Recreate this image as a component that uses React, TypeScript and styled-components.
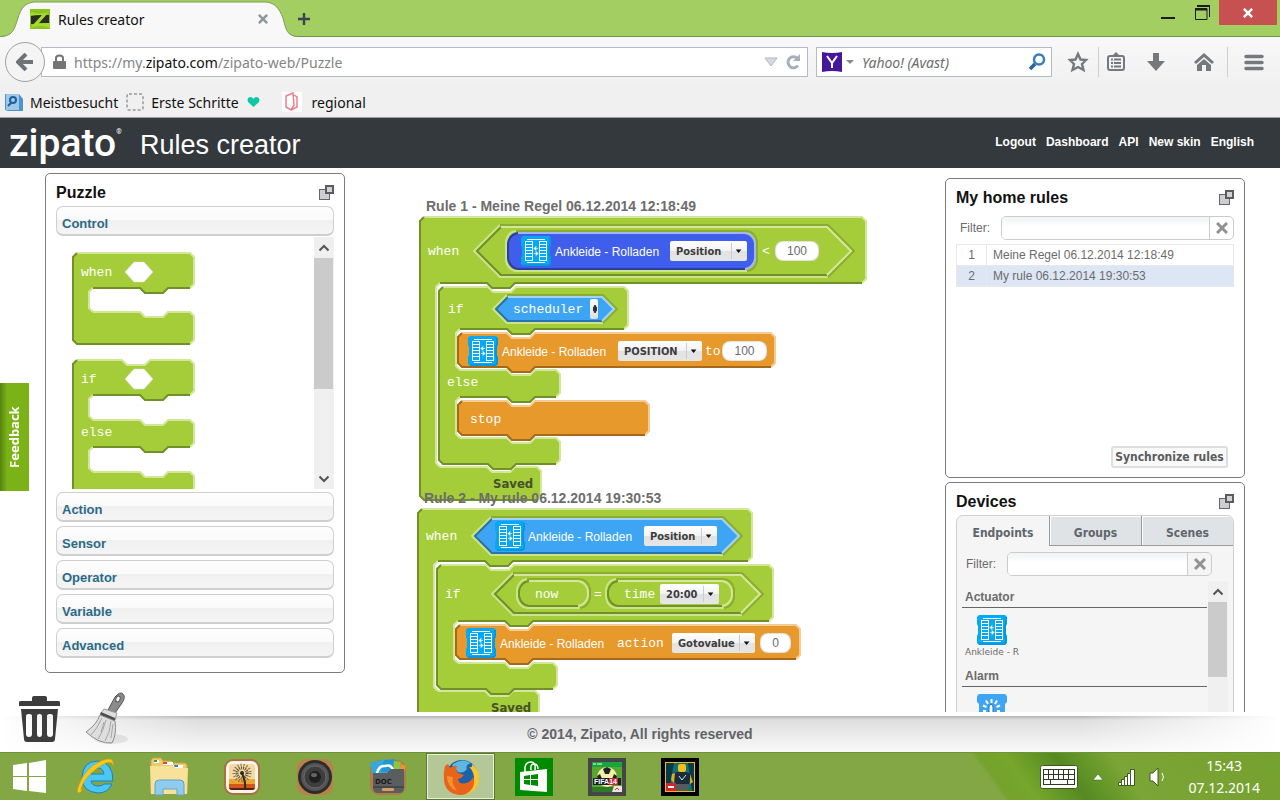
import React from "react";
import styled, { createGlobalStyle, css } from "styled-components";

const ui = `"Noto Sans", "Open Sans", sans-serif`;
const arial = `"Liberation Sans", Arial, sans-serif`;
const tahoma = `"DejaVu Sans Condensed", Tahoma, "Noto Sans", sans-serif`;
const mono = `"Liberation Mono", "Courier New", monospace`;

const GlobalStyle = createGlobalStyle`
  * {
    box-sizing: border-box;
  }

  body {
    margin: 0;
    background: #fff;
    font-family: ${arial};
    color: #6b6b6b;
  }

  button,
  input,
  select {
    font: inherit;
    color: inherit;
    margin: 0;
    padding: 0;
    border: 0;
    background: none;
  }

  a {
    color: inherit;
    text-decoration: none;
  }

  svg {
    display: block;
    flex: none;
  }
`;

/* ---------- puzzle block drawing ---------- */

type Palette = { fill: string; light: string; dark: string };

const green: Palette = { fill: "#a5cd39", light: "#d2e79a", dark: "#71902a" };
const orange: Palette = { fill: "#e7992b", light: "#f4ca95", dark: "#a4691a" };
const sky: Palette = { fill: "#3ea5f4", light: "#a3d3fb", dark: "#2a73ac" };
const indigo: Palette = { fill: "#3f5eeb", light: "#a6b4f8", dark: "#2a3f9e" };
const inset: Palette = { fill: "#a5cd39", light: "#8bac30", dark: "#cbe38b" };

interface StackProps {
  x: number;
  y: number;
  arms: { right: number; bottom: number }[];
  slots?: { x: number; bottom: number }[];
  socket?: boolean;
  bump?: boolean;
  palette?: Palette;
}

// arms are the horizontal bars of the block, slots the openings between them
const StackBlock: React.FC<StackProps> = ({
  x,
  y,
  arms,
  slots = [],
  socket,
  bump,
  palette = green,
}) => {
  const c = 4;
  const light: string[] = [];
  const dark: string[] = [];
  const all: string[] = [];
  const add = (list: string[], from: string, rest: string) => {
    list.push(`M${from}${rest}`);
    all.push(`${all.length ? "L" : "M"}${from}${rest}`);
  };
  const dipRight = (n: number, top: number) =>
    `H${n}L${n + 5} ${top + 5}H${n + 23}L${n + 28} ${top}`;
  const dipLeft = (n: number, top: number) =>
    `H${n + 28}L${n + 23} ${top + 5}H${n + 5}L${n} ${top}`;

  let top = y;
  let left = x;
  arms.forEach((arm, i) => {
    const notch = i > 0 ? dipRight(left + 51, top) : socket ? dipRight(x + 49, y) : "";
    add(
      light,
      `${left + c} ${top}`,
      `${notch}H${arm.right - c}L${arm.right} ${top + c}V${arm.bottom - c}L${arm.right - c} ${arm.bottom}`
    );
    const slot = slots[i];
    if (slot) {
      add(dark, `${arm.right - c} ${arm.bottom}`, `${dipLeft(slot.x + 51, arm.bottom)}H${slot.x + c}`);
      add(
        light,
        `${slot.x + c} ${arm.bottom}`,
        `L${slot.x} ${arm.bottom + c}V${slot.bottom - c}L${slot.x + c} ${slot.bottom}`
      );
      top = slot.bottom;
      left = slot.x;
    } else {
      add(
        dark,
        `${arm.right - c} ${arm.bottom}`,
        `${bump ? dipLeft(x + 49, arm.bottom) : ""}H${x + c}L${x} ${arm.bottom - c}V${y + c}L${x + c} ${y}`
      );
    }
  });

  return (
    <g fill="none" strokeWidth="2">
      <path d={all.join("")} fill={palette.fill} />
      <path d={light.join("")} stroke={palette.light} />
      <path d={dark.join("")} stroke={palette.dark} />
    </g>
  );
};

interface BoxProps {
  l: number;
  t: number;
  r: number;
  b: number;
  palette: Palette;
}

const Hex: React.FC<BoxProps> = ({ l, t, r, b, palette }) => {
  const m = (t + b) / 2;
  const c = m - t;
  return (
    <g strokeWidth="2" strokeLinejoin="round">
      <path d={`M${l} ${m}L${l + c} ${t}H${r - c}L${r} ${m}L${r - c} ${b}H${l + c}Z`} fill={palette.fill} />
      <path d={`M${l + c} ${t}L${l} ${m}L${l + c} ${b}H${r - c}`} fill="none" stroke={palette.dark} />
      <path d={`M${l + c} ${t}H${r - c}L${r} ${m}L${r - c} ${b}`} fill="none" stroke={palette.light} />
    </g>
  );
};

const Pill: React.FC<BoxProps> = ({ l, t, r, b, palette }) => (
  <g strokeWidth="2">
    <rect x={l} y={t} width={r - l} height={b - t} rx="10" fill={palette.fill} />
    <path
      d={`M${l + 10} ${t}Q${l + 2} ${t + 1} ${l} ${t + 10}V${b - 10}Q${l + 2} ${b - 1} ${l + 10} ${b}H${r - 10}`}
      fill="none"
      stroke={palette.dark}
    />
    <path
      d={`M${l + 10} ${t}H${r - 10}Q${r - 2} ${t + 1} ${r} ${t + 10}V${b - 10}Q${r - 2} ${b - 1} ${r - 10} ${b}`}
      fill="none"
      stroke={palette.light}
    />
  </g>
);

const HexBlock: React.FC<BoxProps> = ({ l, t, r, b, palette }) => (
  <>
    <Hex l={l} t={t} r={r} b={b} palette={inset} />
    <Hex l={l + 3} t={t + 2} r={r - 3} b={b - 2} palette={palette} />
  </>
);

const PillBlock: React.FC<BoxProps> = ({ l, t, r, b, palette }) => (
  <>
    <Pill l={l} t={t} r={r} b={b} palette={inset} />
    <Pill l={l + 2} t={t + 2} r={r - 2} b={b - 2} palette={palette} />
  </>
);

/* ---------- icons ---------- */

const ShutterIcon = () => (
  <svg width="30" height="30" viewBox="0 0 30 30" aria-hidden="true">
    <path d="M2 0H28L30 2V9L29 11V19L30 21V28L28 30H2L0 28V21L1 19V11L0 9V2Z" fill="#03a9f4" />
    <path d="M29 2V8L28 10V20L29 22V28L28 29H2" fill="none" stroke="#0288d1" />
    <path
      d="M6 3.5H24M6 26.5H24M4.5 5V25M11.5 5V25M18.5 5V25M25.5 5V25M4 5.5H12M4 8.5H12M4 11.5H12M4 14.5H12M4 17.5H12M4 20.5H12M4 24.5H12M18 5.5H26M18 8.5H26M18 11.5H26M18 14.5H26M18 17.5H26M18 20.5H26M18 24.5H26"
      stroke="#fff"
      fill="none"
    />
    <path d="M13 12.5H17M13 12.5L15 10.5V14.5ZM17 17.5H13M17 17.5L15 15.5V19.5Z" stroke="#fff" strokeWidth=".6" fill="#fff" />
  </svg>
);

const TouchIcon = () => (
  <svg width="30" height="30" viewBox="0 0 30 30" aria-hidden="true">
    <path d="M2 0H28L30 2V8L28 10V20L30 22V28L28 30H2L0 28V22L2 20V10L0 8V2Z" fill="#3ea5f4" />
    <path d="M14.5 5V9M9 6.5L11 10M20 6.5L18 10M6 11.5L9.5 13M23 11.5L19.5 13M6 17H9M20 17H23" stroke="#fff" strokeWidth="2" />
    <path d="M12 30V13Q12 10.5 14 10.5T16 13V19L22 21V30" fill="#fff" stroke="#2477b3" />
  </svg>
);

const DetachIcon = () => (
  <svg width="15" height="15" viewBox="0 0 15 15" aria-hidden="true">
    <rect x=".5" y="4.5" width="10" height="10" fill="#cfcdd2" stroke="#666" />
    <rect x="7" y="1" width="7" height="7" fill="#d4d2d6" stroke="#5c5c5c" strokeWidth="2" />
  </svg>
);

const CrossIcon = ({ size = 12, color = "#929292" }: { size?: number; color?: string }) => (
  <svg width={size} height={size} viewBox="0 0 12 12" aria-hidden="true">
    <path d="M1 1L11 11M11 1L1 11" stroke={color} strokeWidth="3" />
  </svg>
);

const Chevron = ({ down }: { down?: boolean }) => (
  <svg width="10" height="8" viewBox="0 0 10 8" aria-hidden="true">
    <path d={down ? "M.5 1.5L5 6L9.5 1.5" : "M.5 6.5L5 2L9.5 6.5"} fill="none" stroke="#555" strokeWidth="2" />
  </svg>
);

const TrashIcon = () => (
  <svg width="42" height="46" viewBox="0 0 42 46" aria-hidden="true">
    <path d="M0 6Q0 5 2 5H13V2Q13 0 15 0H26Q28 0 28 2V5H39Q41 5 41 6V10H0Z" fill="#3d3d3d" />
    <path
      d="M2 13H39L36 43Q36 46 33 46H8Q5 46 5 43ZM7 20V38Q7 41 10 41T13 38V20Q13 18 10 18T7 20ZM18 20V38Q18 41 20.5 41T23 38V20Q23 18 20.5 18T18 20ZM28 20V38Q28 41 31 41T34 38V20Q34 18 31 18T28 20Z"
      fill="#3d3d3d"
      fillRule="evenodd"
    />
  </svg>
);

const BroomIcon = () => (
  <svg width="44" height="54" viewBox="0 0 44 54" aria-hidden="true">
    <ellipse cx="26" cy="47" rx="17" ry="5" fill="#000" opacity=".08" />
    <path d="M30 5Q35-1 38 2T37 11L30 21L23 18Z" fill="#8b8b8b" stroke="#555" />
    <ellipse cx="33" cy="7" rx="2" ry="3" fill="#fff" stroke="#555" transform="rotate(25 33 7)" />
    <path d="M19 17L32 21L30 28L15 22Z" fill="#ddd" stroke="#999" />
    <path d="M16 20L30 26L30 29L15 23Z" fill="#4b4b4b" />
    <path d="M15 23L30 29Q32 42 27 51Q14 52 1 40Q12 32 15 23Z" fill="#dedede" stroke="#8d8d8d" />
    <path d="M17 26Q12 37 6 43M21 28Q18 40 13 47M26 29Q25 41 20 49M19 30L16 40M28 32L26 46" stroke="#a5a5a5" fill="none" />
  </svg>
);

/* ---------- browser window ---------- */

const Page = styled.div`
  display: flex;
  flex-direction: column;
  height: 100vh;
  overflow: hidden;
`;

const TabStrip = styled.div`
  position: relative;
  display: flex;
  align-items: flex-start;
  height: 37px;
  background: #a3cf62;
  border-bottom: 1px solid #6f9150;
`;

const TabShape = styled.svg`
  position: absolute;
  left: 0;
  top: 0;
`;

const BrowserTab = styled.div`
  position: relative;
  display: flex;
  align-items: center;
  gap: 8px;
  width: 284px;
  height: 38px;
  padding: 0 16px 0 30px;
  font: 14px ${ui};
  color: #111;

  span {
    flex: 1;
  }
`;

const PlainButton = styled.button`
  display: flex;
  align-items: center;
  justify-content: center;
  cursor: pointer;
`;

const NewTab = styled(PlainButton)`
  width: 40px;
  height: 38px;
`;

const WindowButtons = styled.div`
  display: flex;
  margin-left: auto;
  padding-right: 3px;
`;

const WindowButton = styled(PlainButton)<{ $close?: boolean }>`
  width: ${({ $close }) => ($close ? "58px" : "34px")};
  height: 25px;
  background: ${({ $close }) => ($close ? "#c75050" : "transparent")};
`;

const NavBar = styled.div`
  display: flex;
  align-items: center;
  height: 50px;
  padding-left: 5px;
  background: linear-gradient(#f8f8f8, #f0f0f0);
`;

const BackButton = styled(PlainButton)`
  position: relative;
  width: 40px;
  height: 40px;
  margin-right: -4px;
  border: 1px solid #a0a0a0;
  border-radius: 50%;
  background: #f4f4f4;
`;

const Field = styled.div<{ $grow?: boolean }>`
  display: flex;
  align-items: center;
  height: 30px;
  border: 1px solid #b4bac8;
  background: #fff;
  ${({ $grow }) =>
    $grow
      ? css`
          flex: 1;
          padding: 0 0 0 11px;
          margin-right: 8px;
        `
      : css`
          width: 236px;
          padding: 0 5px;
          margin-right: 5px;
        `}
`;

const Address = styled.div`
  flex: 1;
  margin-left: 8px;
  font: 14px ${ui};
  color: #858585;

  b {
    font-weight: 400;
    color: #111;
  }
`;

const SearchInput = styled.input`
  flex: 1;
  min-width: 0;
  margin-left: 8px;
  font: italic 14px ${ui};

  &::placeholder {
    color: #6d6d6d;
    opacity: 1;
  }
`;

const Tools = styled.div`
  display: flex;
  align-items: center;
  height: 50px;
`;

const Tool = styled(PlainButton)<{ $w: number; $line?: boolean }>`
  width: ${({ $w }) => $w}px;
  height: 30px;
  ${({ $line }) => $line && "border-left: 1px solid #c9d0d8;"}
`;

const Bookmarks = styled.nav`
  display: flex;
  align-items: center;
  height: 31px;
  padding-left: 5px;
  background: #f0f0f0;
  border-bottom: 1px solid #9aa39f;
  font: 14px ${ui};
  color: #111;
`;

const Bookmark = styled.a<{ $gap?: number }>`
  display: flex;
  align-items: center;
  gap: 7px;
  margin-right: ${({ $gap = 8 }) => $gap}px;
`;

/* ---------- page header ---------- */

const Header = styled.header`
  display: flex;
  align-items: center;
  height: 50px;
  flex: none;
  padding: 0 26px 0 9px;
  background: #34393d;
  color: #fff;
`;

const Logo = styled.a`
  width: 131px;
  font: 500 39px/48px Roboto, sans-serif;

  sup {
    font-size: 7px;
    line-height: 0;
    vertical-align: 22px;
  }
`;

const PageTitle = styled.h1`
  margin: 0;
  padding-top: 5px;
  font: 27px ${arial};
`;

const HeaderLinks = styled.nav`
  display: flex;
  gap: 10px;
  margin-left: auto;
  padding-bottom: 2px;
  font-size: 12px;
  font-weight: bold;
`;

/* ---------- panels ---------- */

const Main = styled.main`
  display: flex;
  flex: 1;
  min-height: 0;
  margin-bottom: 4px;
  padding: 0 35px 0 45px;
  overflow: hidden;
`;

const Column = styled.div<{ $top: number }>`
  display: flex;
  flex-direction: column;
  flex: none;
  gap: 4px;
  width: 300px;
  padding-top: ${({ $top }) => $top}px;
`;

const Panel = styled.section<{ $height?: number }>`
  display: flex;
  flex-direction: column;
  flex: none;
  min-height: ${({ $height = 0 }) => $height}px;
  padding: 0 10px;
  border: 1px solid #7c7c7c;
  border-radius: 5px;
  background: #fff;
`;

const PanelHead = styled.div<{ $tall?: boolean }>`
  display: flex;
  align-items: center;
  justify-content: space-between;
  height: ${({ $tall }) => ($tall ? 37 : 32)}px;
  padding-top: ${({ $tall }) => ($tall ? 0 : 5)}px;

  h2 {
    margin: 0;
    font: bold 16px ${arial};
    color: #111;
  }
`;

const Accordion = styled.div`
  display: flex;
  flex-direction: column;
  gap: 4px;
`;

const AccordionHead = styled.button`
  height: 30px;
  padding: 6px 0 0 5px;
  text-align: left;
  font: bold 13px ${arial};
  color: #2b6a86;
  border: 1px solid #cfcfcf;
  border-bottom-width: 2px;
  border-radius: 7px;
  background: linear-gradient(#fdfdfd, #fafafa 48%, #f0f0f0 50%, #f5f5f5);
`;

const Pane = styled.div`
  display: flex;
  height: 252px;
  margin-top: -3px;
  margin-bottom: -1px;
  overflow: hidden;
`;

const PaletteArea = styled.div`
  flex: 1;
  padding: 15px 0 0 16px;
`;

const PaletteBlock = styled.div<{ $height: number }>`
  position: relative;
  height: ${({ $height }) => $height}px;
  padding-left: 9px;
  font: 13px ${mono};
  color: #fff;

  svg {
    position: absolute;
    left: 0;
    top: 0;
    overflow: visible;
  }

  span {
    position: relative;
    display: flex;
    align-items: center;
    height: 40px;
  }

  span + span {
    height: 66px;
  }
`;

const ScrollTrack = styled.div`
  display: flex;
  flex-direction: column;
  width: 20px;
  background: #f0f0f0;
`;

const ScrollArrow = styled(PlainButton)`
  height: 21px;
`;

const Thumb = styled.div<{ $height: number }>`
  height: ${({ $height }) => $height}px;
  margin-right: 1px;
  margin-bottom: auto;
  background: #cbcbcb;
`;

const FilterRow = styled.div<{ $right?: number }>`
  display: flex;
  align-items: center;
  height: 24px;
  padding-right: ${({ $right = 0 }) => $right}px;
  font-size: 12px;

  label {
    width: 45px;
    padding-left: 4px;
  }
`;

const FilterBox = styled.div`
  display: flex;
  flex: 1;
  height: 24px;
  border: 1px solid #cbcbcb;
  border-radius: 5px;
  overflow: hidden;

  input {
    flex: 1;
    min-width: 0;
    padding: 0 5px;
    background: linear-gradient(#f0f4f4, #fff 10px);
  }

  button {
    width: 24px;
    border-left: 1px solid #cbcbcb;
  }
`;

const RulesTable = styled.table`
  width: 100%;
  margin-top: 4px;
  border-collapse: collapse;
  font-size: 12px;

  td {
    height: 21px;
    padding: 0 6px 1px;
    border: 1px solid #e8e8e8;
  }

  td:first-child {
    width: 30px;
    padding: 0 0 1px;
    text-align: center;
  }
`;

const RuleRow = styled.tr<{ $active?: boolean }>`
  background: ${({ $active }) => ($active ? "#dde6f5" : "#fff")};
`;

const SyncButton = styled.button`
  align-self: flex-end;
  width: 117px;
  height: 22px;
  margin: auto 6px 9px 0;
  border: 2px solid #dedede;
  border-radius: 3px;
  background: #f8f9f9;
  white-space: nowrap;
  font: bold 12px ${tahoma};
  color: #5b5b5b;
`;

const TabBox = styled.div`
  border: 1px solid #cfcfcf;
  border-radius: 7px 7px 0 0;
  background: #f5f5f5;
  overflow: hidden;
`;

const Tabs = styled.div`
  display: grid;
  grid-template-columns: 1fr 1fr 1fr;
  height: 30px;
`;

const TabButton = styled.button<{ $active?: boolean }>`
  padding-top: 4px;
  font: bold 12px ${tahoma};
  color: #60666b;
  ${({ $active }) =>
    !$active &&
    css`
      background: #dfe3e6;
      border-left: 1px solid #999;
      border-bottom: 1px solid #999;
      box-shadow: inset 1px 1px #fff;
    `}
`;

const TabBody = styled.div`
  padding: 6px 5px 0;
`;

const DeviceScroll = styled.div`
  display: flex;
  height: 240px;
  margin-top: 5px;
`;

const DeviceList = styled.div`
  flex: 1;
  padding-top: 6px;
`;

const GroupTitle = styled.h3`
  margin: 0 1px 7px 0;
  padding: 0 3px;
  border-bottom: 1px solid #666;
  font: bold 12px/20px ${arial};
`;

const DeviceItem = styled.a`
  display: block;
  margin-bottom: 7px;
  padding-left: 3px;
  white-space: nowrap;
  font: 9px/14px "DejaVu Sans", Verdana, sans-serif;

  svg {
    margin-left: 12px;
  }
`;

/* ---------- rule canvas ---------- */

const Canvas = styled.div`
  position: relative;
  flex: 1;
  overflow: hidden;
`;

const Rule = styled.article<{ $x: number; $y: number }>`
  position: absolute;
  left: ${({ $x }) => $x}px;
  top: ${({ $y }) => $y}px;
  font: 13px ${mono};
  color: #fff;

  > svg {
    position: absolute;
    left: 0;
    top: 19px;
    overflow: visible;
  }
`;

const RuleTitle = styled.h3`
  position: relative;
  margin: 0;
  padding-left: 7px;
  font: bold 14px/20px ${arial};
  color: #6d6d6d;
  white-space: nowrap;
`;

const BlockRow = styled.div<{ $height: number; $indent: number; $cols?: string }>`
  position: relative;
  display: grid;
  grid-template-columns: ${({ $cols = "auto" }) => $cols};
  align-items: center;
  height: ${({ $height }) => $height}px;
  padding-left: ${({ $indent }) => $indent}px;
`;

const DeviceName = styled.span`
  padding-top: 2px;
  font: 12px ${arial};
  white-space: nowrap;
`;

const Saved = styled.strong`
  font: bold 13px ${tahoma};
  color: #46502a;
`;

const Drop = styled.span<{ $width: number }>`
  display: flex;
  align-items: center;
  width: ${({ $width }) => $width}px;
  height: 20px;
  border-radius: 2px;
  background: linear-gradient(#fff, #f3f3f3 48%, #e2e2e2 52%, #e6e6e6);

  select {
    flex: 1;
    min-width: 0;
    height: 20px;
    padding-left: 6px;
    appearance: none;
    font: bold 11px ${tahoma};
    color: #3c3c3c;
  }

  svg {
    width: 16px;
    height: 16px;
    border-left: 1px solid #ccc;
  }
`;

const MiniSelect = styled.select`
  width: 8px;
  height: 20px;
  appearance: none;
  border-radius: 2px;
  background: radial-gradient(ellipse 2px 4px at 5px 10px, #333 90%, transparent), linear-gradient(#fff, #ddd);
`;

const NumberInput = styled.input<{ $width: number }>`
  width: ${({ $width }) => $width}px;
  height: 20px;
  border-radius: 8px;
  background: #fff;
  box-shadow: inset 0 0 2px #999;
  text-align: center;
  font: 12px ${arial};
  color: #6b6b6b;
`;

interface DropdownProps {
  width: number;
  value: string;
  label: string;
}

const Dropdown: React.FC<DropdownProps> = ({ width, value, label }) => (
  <Drop $width={width}>
    <select aria-label={label}>
      <option>{value}</option>
    </select>
    <svg viewBox="0 0 16 16" aria-hidden="true">
      <path d="M4 6.5H10L7 10Z" fill="#111" />
    </svg>
  </Drop>
);

/* ---------- feedback, footer, taskbar ---------- */

const Feedback = styled.button`
  position: fixed;
  left: 0;
  top: 383px;
  width: 29px;
  height: 108px;
  writing-mode: vertical-rl;
  transform: rotate(180deg);
  background: linear-gradient(270deg, #55820f, #7bb216 7px);
  font: bold 13px ${ui};
  color: #fff;
`;

const Footer = styled.footer`
  position: relative;
  display: flex;
  align-items: center;
  justify-content: center;
  flex: none;
  height: 36px;
  background: linear-gradient(90deg, #fff, transparent 200px), linear-gradient(270deg, #fff, transparent 200px),
    linear-gradient(#b4b4b4, #dedede 4px, #f9f9f9);
  font: bold 14px ${arial};
  color: #5f6467;
`;

const CanvasTools = styled.div`
  position: absolute;
  left: 19px;
  bottom: 6px;
  display: flex;
  align-items: center;
  gap: 24px;
`;

const Taskbar = styled.div`
  display: flex;
  flex: none;
  height: 48px;
  border-top: 1px solid #6f9238;
  background: linear-gradient(
      54deg,
      transparent 812px,
      #74a22c 818px,
      #76a62b 840px,
      #558a22 880px,
      #6c9c2c 910px,
      #7ba536 925px,
      #75a12f
    ),
    #83a745;
`;

const TaskItem = styled(PlainButton)<{ $active?: boolean; $width?: number }>`
  width: ${({ $width = 73 }) => $width}px;
  ${({ $active }) =>
    $active &&
    css`
      border: 1px solid #5d7638;
      margin: 0 2px;
      width: 69px;
      background: #b4c796;
      box-shadow: inset 0 0 0 1px #e9f0dc;
    `}
`;

const Tray = styled.div`
  display: flex;
  align-items: center;
  gap: 14px;
  margin-left: auto;
  padding-right: 20px;
`;

const Clock = styled.time`
  margin-left: 7px;
  text-align: center;
  font: 14px/22px ${ui};
  color: #fff;
`;

const tile = { width: 38, height: 38, viewBox: "0 0 38 38", "aria-hidden": true };

const IeIcon = () => (
  <svg width="40" height="40" viewBox="0 0 40 40" aria-hidden="true">
    <path
      d="M37 24H15Q16 29 22 29Q26 29 28 27H36Q32 36 22 36Q6 35 6 20Q7 4 22 4Q37 5 37 24ZM15 17H28Q27 11 22 11T15 17Z"
      fill="#4cc6f4"
      stroke="#1484c4"
      fillRule="evenodd"
    />
    <path d="M9 31Q-2 42 3 28Q9 11 25 4Q39-2 37 9Q36 2 26 8Q10 18 6 29Q3 37 9 31Z" fill="#fbc917" stroke="#d99b09" strokeWidth=".6" />
  </svg>
);

const FolderIcon = () => (
  <svg width="40" height="40" viewBox="0 0 40 40" aria-hidden="true">
    <path d="M2 3L4 1H12L14 4H22L24 6H36L38 8V36H2Z" fill="#eccb6b" stroke="#c9a447" />
    <path d="M5 3H10V6H5ZM14 5H24V8H14ZM24 8H34V11H24Z" fill="#fff" />
    <path d="M5 3H8V5H5Z" fill="#27a35a" />
    <path d="M14 5H18V7H14Z" fill="#e0492f" />
    <path d="M25 8H29V10H25Z" fill="#3286d4" />
    <path d="M1 9H25L27 11H39L38 37H2Z" fill="#f8e29a" />
    <path d="M6 38V27Q6 23 10 23H31Q35 23 35 27V38H28V32H14V38Z" fill="#8ecbec" stroke="#5aa6d2" />
  </svg>
);

const DandelionIcon = () => (
  <svg {...tile}>
    <rect x="1" y="1" width="36" height="36" rx="9" fill="#a8713d" />
    <rect x="3" y="3" width="32" height="32" rx="7" fill="#f7f4ef" />
    <rect x="6" y="6" width="26" height="26" rx="3" fill="#f3dba0" />
    <path d="M6 21H32V29Q32 32 29 32H9Q6 32 6 29Z" fill="#eda534" />
    <path d="M6 26H32V29Q32 32 29 32H9Q6 32 6 29Z" fill="#d2571a" />
    <path d="M6 30H32Q31 32 29 32H9Q7 32 6 30Z" fill="#5b210e" />
    <circle cx="19" cy="15" r="8" fill="none" stroke="#7d6c55" strokeWidth="3" strokeDasharray="1 2" />
    <circle cx="19" cy="15" r="5" fill="none" stroke="#5a4b3a" strokeWidth="3" strokeDasharray="1 1" />
    <circle cx="19" cy="15" r="2" fill="#332718" />
    <path d="M19 15Q23 24 22 32" stroke="#332718" strokeWidth="2" fill="none" />
  </svg>
);

const SpeakerIcon = () => (
  <svg {...tile}>
    <rect x="1" y="1" width="36" height="36" rx="9" fill="#b88149" />
    <circle cx="19" cy="19" r="17" fill="#2c2c2c" />
    <circle cx="19" cy="19" r="14" fill="#555" />
    <circle cx="19" cy="19" r="11" fill="#3d3d3d" stroke="#6a6a6a" />
    <circle cx="19" cy="19" r="6" fill="#1f1f1f" />
    <ellipse cx="18" cy="17" rx="3" ry="2" fill="#666" />
  </svg>
);

const DocIcon = () => (
  <svg {...tile}>
    <rect x="1" y="2" width="36" height="35" rx="9" fill="#b27a44" />
    <path d="M1 5L16 1L20 14L5 22Z" fill="#35a9dc" />
    <path d="M15 2L26 1V14H12Z" fill="#2396cf" />
    <path d="M25 3L32 4L30 14H24Z" fill="#8cc63f" />
    <path d="M32 6L37 8L35 14H30Z" fill="#f2932e" />
    <path d="M8 15Q10 7 16 8Q22 6 24 12L30 16" stroke="#fff" strokeWidth="2.5" fill="none" />
    <path d="M4 15H18L22 11H35V30Q35 35 30 35H9Q4 35 4 30Z" fill="#5b5e61" />
    <path d="M4 29H35" stroke="#2f3133" />
    <rect x="13" y="30" width="12" height="3" rx="1" fill="#d89c5c" />
    <text x="6" y="26" fontFamily="DejaVu Sans, sans-serif" fontWeight="bold" fontSize="7" fill="#1b1b1b">
      DOC
    </text>
  </svg>
);

const FirefoxIcon = () => (
  <svg {...tile}>
    <circle cx="20" cy="18" r="16" fill="#1d62a8" />
    <path d="M10 7Q19-1 29 5Q23 7 25 11Q21 16 16 14Z" fill="#5fb6e3" />
    <path d="M30 6Q38 12 37 22Q35 34 23 37Q33 29 32 19Q31 12 27 9Q31 10 30 6Z" fill="#fbc62d" />
    <path d="M3 8L6 6L8 10Q12 7 15 8Q13 11 16 15L22 17Q20 20 16 21Q17 27 24 25Q29 24 31 19Q34 27 29 32Q25 37 18 37Q4 36 2 23Q1 15 3 8Z" fill="#e8641b" />
    <path d="M5 18Q5 29 15 33Q9 25 11 19Z" fill="#f6922c" />
  </svg>
);

const StoreIcon = () => (
  <svg {...tile}>
    <rect width="38" height="38" fill="#008a00" />
    <path d="M10 14V9Q11 4 16 4T20 12M16 12Q15 6 19 6T23 11" fill="none" stroke="#fff" strokeWidth="1.5" />
    <path d="M5 14L32 11V34L5 32Z" fill="#fff" />
    <path d="M9 18L15 17V21H9ZM16 17L23 16V21H16ZM9 22H15V27L9 26ZM16 22H23V28L16 27Z" fill="#008a00" />
  </svg>
);

const FifaIcon = () => (
  <svg {...tile}>
    <rect width="38" height="38" fill="#454545" />
    <rect x="4" y="4" width="30" height="30" fill="#57a82c" />
    <rect x="4" y="4" width="30" height="5" fill="#17a63d" />
    <path d="M5 6H8M9 6H14" stroke="#fff" />
    <circle cx="19" cy="19" r="10" fill="#f3efa8" />
    <path d="M15 11L19 9L23 11L21 16H17ZM9 18L12 16L14 21L10 23ZM29 18L26 16L24 21L28 23Z" fill="#222" />
    <path d="M4 29H34V34H4Z" fill="#2f7a26" />
    <rect x="5" y="20" width="28" height="7" fill="#17202c" />
    <rect x="21" y="20" width="9" height="7" fill="#c9263a" />
    <text x="6" y="26" fontFamily="Liberation Sans, sans-serif" fontWeight="bold" fontSize="7" fill="#fff">
      FIFA14
    </text>
    <path d="M24 34L26 28H34V34Z" fill="#e9e2e2" />
    <path d="M27 32L29 30L31 32" stroke="#d33" fill="none" />
  </svg>
);

const LegoIcon = () => (
  <svg {...tile}>
    <rect width="38" height="38" />
    <rect x="4.5" y="4.5" width="29" height="29" fill="#0f6f7a" stroke="#f0b81a" />
    <path d="M5 5H13L8 33H5ZM33 5H27L31 33H33Z" fill="#063a45" />
    <rect x="17" y="6" width="8" height="8" rx="2" fill="#eebf1e" />
    <path d="M12 15L17 14H25L30 16L28 26H14Z" fill="#1b2d3b" />
    <path d="M11 16L14 15L13 25L10 22ZM29 16L32 24L29 26Z" fill="#dfae1c" />
    <path d="M14 26H28L27 33H16Z" fill="#545b60" />
    <path d="M18 18L21 22L25 17" stroke="#d0dce0" fill="none" />
    <rect x="5" y="25" width="10" height="8" fill="#d8232a" />
    <path d="M7 29H13" stroke="#fff" strokeWidth="2" />
  </svg>
);

const categories = ["Action", "Sensor", "Operator", "Variable", "Advanced"];
const rules = ["Meine Regel 06.12.2014 12:18:49", "My rule 06.12.2014 19:30:53"];
const headerLinks = ["Logout", "Dashboard", "API", "New skin", "English"];
const apps: [string, React.FC][] = [
  ["Internet Explorer", IeIcon],
  ["Explorer", FolderIcon],
  ["Photos", DandelionIcon],
  ["Sound", SpeakerIcon],
  ["Documents", DocIcon],
  ["Firefox", FirefoxIcon],
  ["Store", StoreIcon],
  ["FIFA 14", FifaIcon],
  ["Lego", LegoIcon],
];

const Browser = () => (
  <>
    <TabStrip>
      <TabShape width="300" height="38" aria-hidden="true">
        <path
          d="M0 37C13 36 14 30 18 18C21 8 25 3 34 2H266C275 3 279 8 283 18C286 30 287 36 298 37V38H0Z"
          fill="#f8f8f8"
        />
        <path d="M0 36.5C13 36 14 30 18 18C21 8 25 3 34 2H266C275 3 279 8 283 18C286 30 287 36 298 36.5" fill="none" stroke="#7f9d5b" />
      </TabShape>
      <BrowserTab>
        <svg width="20" height="20" viewBox="0 0 20 20" aria-hidden="true">
          <rect width="20" height="20" fill="#8cc31f" />
          <path d="M1 6H12L7 15H1ZM19 6V14H9L15 6Z" fill="#2b2b28" />
          <path d="M1 3Q9 6 19 3L8 15Q14 14 20 14V19Q10 15 0 19L12 6Q5 6 0 7Z" fill="#a4dc2c" />
        </svg>
        <span>Rules creator</span>
        <PlainButton aria-label="Close tab">
          <CrossIcon size={10} color="#8d959f" />
        </PlainButton>
      </BrowserTab>
      <NewTab aria-label="New tab">
        <svg width="14" height="14" aria-hidden="true">
          <path d="M7 1V13M1 7H13" stroke="#3b4450" strokeWidth="2.4" />
        </svg>
      </NewTab>
      <WindowButtons>
        <WindowButton aria-label="Minimize">
          <svg width="14" height="18" aria-hidden="true">
            <path d="M0 14H14" stroke="#1c1c1c" strokeWidth="2" />
          </svg>
        </WindowButton>
        <WindowButton aria-label="Restore">
          <svg width="15" height="15" aria-hidden="true">
            <path d="M2 1H14.5V12M.5 3.5H12V14.5H.5ZM1 5H12" fill="none" stroke="#1c1c1c" />
            <path d="M0 4H12M2 1H15" stroke="#1c1c1c" strokeWidth="2" />
          </svg>
        </WindowButton>
        <WindowButton $close aria-label="Close">
          <CrossIcon size={10} color="#fff" />
        </WindowButton>
      </WindowButtons>
    </TabStrip>
    <NavBar>
      <BackButton aria-label="Back">
        <svg width="18" height="18" viewBox="0 0 18 18" aria-hidden="true">
          <path d="M10 1L2 9L10 17M3 9H17" fill="none" stroke="#6f7276" strokeWidth="4" />
        </svg>
      </BackButton>
      <Field $grow>
        <svg width="13" height="16" viewBox="0 0 13 16" aria-hidden="true">
          <path d="M3 8V4Q3 1.5 6.5 1.5T10 4V8" fill="none" stroke="#757575" strokeWidth="2" />
          <rect y="7" width="13" height="8" rx="1" fill="#757575" />
        </svg>
        <Address>
          https://my.<b>zipato.com</b>/zipato-web/Puzzle
        </Address>
        <PlainButton aria-label="History">
          <svg width="14" height="10" aria-hidden="true">
            <path d="M1 1H13L7 9Z" fill="#d5dae0" stroke="#b0b8c2" />
          </svg>
        </PlainButton>
        <Tool $w={29} aria-label="Reload">
          <svg width="16" height="16" viewBox="0 0 16 16" aria-hidden="true">
            <path d="M12.5 4.5A5.5 5.5 0 1 0 13 11.5" fill="none" stroke="#a6b0bb" strokeWidth="3" />
            <path d="M15 0V7H8Z" fill="#a6b0bb" />
          </svg>
        </Tool>
      </Field>
      <Field>
        <svg width="24" height="20" aria-hidden="true">
          <path d="M0 0Q10 2 20 0V20Q10 18 0 20Z" fill="#45189b" />
          <path d="M5 4L10 11L15 4M10 11V16" stroke="#fff" strokeWidth="2" fill="none" />
        </svg>
        <svg width="8" height="5" aria-hidden="true">
          <path d="M0 0H8L4 4Z" fill="#888" />
        </svg>
        <SearchInput placeholder="Yahoo! (Avast)" aria-label="Search" />
        <PlainButton aria-label="Go">
          <svg width="18" height="18" aria-hidden="true">
            <circle cx="11" cy="6.5" r="5" fill="none" stroke="#3a7dbd" strokeWidth="2.5" />
            <path d="M7 11L2 16" stroke="#2f62a5" strokeWidth="3.5" />
          </svg>
        </PlainButton>
      </Field>
      <Tools>
        <Tool $w={41} aria-label="Bookmark">
          <svg width="22" height="22" viewBox="0 0 22 22" aria-hidden="true">
            <path d="M11 3L13.5 8.5L19 9L15 13L16.5 19L11 16L5.5 19L7 13L3 9L8.5 8.5Z" fill="none" stroke="#75787c" strokeWidth="2.4" />
          </svg>
        </Tool>
        <Tool $w={34} $line aria-label="Bookmark list">
          <svg width="18" height="20" viewBox="0 0 18 20" aria-hidden="true">
            <path d="M5 4L9 0L13 4Z" fill="#75787c" />
            <rect x="1" y="4" width="16" height="14" rx="2" fill="none" stroke="#75787c" strokeWidth="2" />
            <path d="M4 7.5H6M7 7.5H14M4 11H6M7 11H14M4 14.5H6M7 14.5H14" stroke="#75787c" strokeWidth="2" />
          </svg>
        </Tool>
        <Tool $w={48} aria-label="Downloads">
          <svg width="18" height="19" aria-hidden="true">
            <path d="M6 0H12V8H18L9 18L0 8H6Z" fill="#75787c" />
          </svg>
        </Tool>
        <Tool $w={47} aria-label="Home">
          <svg width="20" height="19" aria-hidden="true">
            <path d="M10 0L20 9L18 11L10 4L2 11L0 9Z" fill="#75787c" />
            <path d="M10 6L17 12V18H12V12H8V18H3V12Z" fill="#75787c" />
          </svg>
        </Tool>
        <Tool $w={53} $line aria-label="Menu">
          <svg width="20" height="17" aria-hidden="true">
            <path d="M2 2.5H18M2 8.5H18M2 14.5H18" stroke="#75787c" strokeWidth="3.5" strokeLinecap="round" />
          </svg>
        </Tool>
      </Tools>
    </NavBar>
    <Bookmarks>
      <Bookmark href="#meist">
        <svg width="18" height="19" aria-hidden="true">
          <path d="M0 1H14L18 6V18H3L0 17Z" fill="#4f91c8" />
          <rect x="1" y="1" width="13" height="16" fill="#9cc9ea" />
          <circle cx="8" cy="7" r="3" fill="none" stroke="#1f5f9c" strokeWidth="2" />
          <path d="M6 10L3 13" stroke="#1f5f9c" strokeWidth="2" />
        </svg>
        Meistbesucht
      </Bookmark>
      <Bookmark href="#start">
        <svg width="18" height="18" aria-hidden="true">
          <rect x="1" y="1" width="16" height="16" rx="2" fill="none" stroke="#989898" strokeWidth="1.5" strokeDasharray="3 2" />
        </svg>
        Erste Schritte
      </Bookmark>
      <Bookmark href="#fav" $gap={22} aria-label="Favorite">
        <svg width="13" height="12" aria-hidden="true">
          <path d="M6.5 11L1 6Q-.5 2 3 1Q5.5 1 6.5 3Q7.5 1 10 1Q13.5 2 12 6Z" fill="#0cc9a4" />
        </svg>
      </Bookmark>
      <Bookmark href="#regional">
        <svg width="23" height="20" aria-hidden="true">
          <rect x="0" width="20" height="20" fill="#fff" />
          <path d="M4 4L11 1L12 13L9 18L4 15ZM12 3L15 5V15L9 18" fill="none" stroke="#ee7d8e" strokeWidth="1.5" />
        </svg>
        regional
      </Bookmark>
    </Bookmarks>
  </>
);

const PuzzlePanel = () => (
  <Panel $height={500}>
    <PanelHead>
      <h2>Puzzle</h2>
      <PlainButton aria-label="Detach Puzzle">
        <DetachIcon />
      </PlainButton>
    </PanelHead>
    <Accordion>
      <AccordionHead>Control</AccordionHead>
      <Pane>
        <PaletteArea>
          <PaletteBlock $height={107}>
            <svg width="124" height="94" aria-hidden="true">
              <StackBlock
                x={1}
                y={1}
                arms={[
                  { right: 122, bottom: 36 },
                  { right: 122, bottom: 92 },
                ]}
                slots={[{ x: 17, bottom: 60 }]}
              />
              <path d="M53 20L62 10H72L81 20L72 30H62Z" fill="#fff" stroke="#ddd" strokeWidth=".5" />
            </svg>
            <span>when</span>
          </PaletteBlock>
          <PaletteBlock $height={150}>
            <svg width="124" height="150" aria-hidden="true">
              <StackBlock
                x={1}
                y={1}
                socket
                bump
                arms={[
                  { right: 122, bottom: 36 },
                  { right: 122, bottom: 88 },
                  { right: 122, bottom: 146 },
                ]}
                slots={[
                  { x: 17, bottom: 61 },
                  { x: 17, bottom: 113 },
                ]}
              />
              <path d="M53 20L62 10H72L81 20L72 30H62Z" fill="#fff" stroke="#ddd" strokeWidth=".5" />
            </svg>
            <span>if</span>
            <span>else</span>
          </PaletteBlock>
        </PaletteArea>
        <ScrollTrack>
          <ScrollArrow aria-label="Scroll up">
            <Chevron />
          </ScrollArrow>
          <Thumb $height={131} />
          <ScrollArrow aria-label="Scroll down">
            <Chevron down />
          </ScrollArrow>
        </ScrollTrack>
      </Pane>
      {categories.map((name) => (
        <AccordionHead key={name}>{name}</AccordionHead>
      ))}
    </Accordion>
  </Panel>
);

const RuleCanvas = () => (
  <Canvas>
    <Rule $x={74} $y={28}>
      <svg width="450" height="290" aria-hidden="true">
        <StackBlock
          x={1}
          y={2}
          arms={[
            { right: 447, bottom: 68 },
            { right: 122, bottom: 285 },
          ]}
          slots={[{ x: 17, bottom: 252 }]}
        />
        <HexBlock l={55} t={10} r={435} b={62} palette={green} />
        <PillBlock l={87} t={16} r={338} b={56} palette={indigo} />
        <StackBlock
          x={20}
          y={72}
          socket
          bump
          arms={[
            { right: 209, bottom: 114 },
            { right: 141, bottom: 182 },
            { right: 141, bottom: 249 },
          ]}
          slots={[
            { x: 37, bottom: 155 },
            { x: 37, bottom: 223 },
          ]}
        />
        <HexBlock l={74} t={80} r={198} b={108} palette={sky} />
        <StackBlock x={39} y={118} socket bump arms={[{ right: 356, bottom: 152 }]} palette={orange} />
        <StackBlock x={39} y={186} socket bump arms={[{ right: 230, bottom: 220 }]} palette={orange} />
      </svg>
      <RuleTitle>Rule 1 - Meine Regel 06.12.2014 12:18:49</RuleTitle>
      <BlockRow $height={70} $indent={9} $cols="93px 34px 115px 92px 13px 44px">
        <span>when</span>
        <ShutterIcon />
        <DeviceName>Ankleide - Rolladen</DeviceName>
        <Dropdown width={77} value="Position" label="Attribute" />
        <span>&lt;</span>
        <NumberInput $width={44} defaultValue="100" aria-label="Value" />
      </BlockRow>
      <BlockRow $height={46} $indent={29} $cols="65px 77px 8px">
        <span>if</span>
        <span>scheduler</span>
        <MiniSelect aria-label="Scheduler" />
      </BlockRow>
      <BlockRow $height={38} $indent={49} $cols="34px 116px 87px 17px 45px">
        <ShutterIcon />
        <DeviceName>Ankleide - Rolladen</DeviceName>
        <Dropdown width={84} value="POSITION" label="Attribute" />
        <span>to</span>
        <NumberInput $width={45} defaultValue="100" aria-label="Value" />
      </BlockRow>
      <BlockRow $height={24} $indent={28}>
        else
      </BlockRow>
      <BlockRow $height={50} $indent={51}>
        stop
      </BlockRow>
      <BlockRow $height={78} $indent={74}>
        <Saved>Saved</Saved>
      </BlockRow>
    </Rule>
    <Rule $x={72} $y={320}>
      <svg width="384" height="232" aria-hidden="true">
        <StackBlock
          x={1}
          y={2}
          arms={[
            { right: 335, bottom: 54 },
            { right: 122, bottom: 230 },
          ]}
          slots={[{ x: 17, bottom: 184 }]}
        />
        <HexBlock l={55} t={10} r={325} b={48} palette={sky} />
        <StackBlock
          x={20}
          y={58}
          socket
          bump
          arms={[
            { right: 356, bottom: 114 },
            { right: 140, bottom: 182 },
          ]}
          slots={[{ x: 37, bottom: 156 }]}
        />
        <HexBlock l={75} t={66} r={346} b={108} palette={green} />
        <PillBlock l={100} t={72} r={173} b={101} palette={green} />
        <PillBlock l={189} t={72} r={317} b={101} palette={green} />
        <StackBlock x={39} y={118} socket bump arms={[{ right: 383, bottom: 152 }]} palette={orange} />
      </svg>
      <RuleTitle>Rule 2 - My rule 06.12.2014 19:30:53</RuleTitle>
      <BlockRow $height={56} $indent={9} $cols="69px 33px 116px 73px">
        <span>when</span>
        <ShutterIcon />
        <DeviceName>Ankleide - Rolladen</DeviceName>
        <Dropdown width={73} value="Position" label="Attribute" />
      </BlockRow>
      <BlockRow $height={60} $indent={28} $cols="90px 59px 30px 36px 59px">
        <span>if</span>
        <span>now</span>
        <span>=</span>
        <span>time</span>
        <Dropdown width={59} value="20:00" label="Time" />
      </BlockRow>
      <BlockRow $height={38} $indent={49} $cols="34px 117px 55px 88px 31px">
        <ShutterIcon />
        <DeviceName>Ankleide - Rolladen</DeviceName>
        <span>action</span>
        <Dropdown width={83} value="Gotovalue" label="Action" />
        <NumberInput $width={31} defaultValue="0" aria-label="Value" />
      </BlockRow>
      <BlockRow $height={90} $indent={74}>
        <Saved>Saved</Saved>
      </BlockRow>
    </Rule>
  </Canvas>
);

const Filter = ({ id, right }: { id: string; right?: number }) => (
  <FilterRow $right={right}>
    <label htmlFor={id}>Filter:</label>
    <FilterBox>
      <input id={id} />
      <PlainButton aria-label="Clear filter">
        <CrossIcon />
      </PlainButton>
    </FilterBox>
  </FilterRow>
);

const RulesPanel = () => (
  <Panel $height={300}>
    <PanelHead $tall>
      <h2>My home rules</h2>
      <PlainButton aria-label="Detach rules">
        <DetachIcon />
      </PlainButton>
    </PanelHead>
    <Filter id="rule-filter" />
    <RulesTable>
      <tbody>
        {rules.map((name, i) => (
          <RuleRow key={name} $active={i === 1}>
            <td>{i + 1}</td>
            <td>{name}</td>
          </RuleRow>
        ))}
      </tbody>
    </RulesTable>
    <SyncButton>Synchronize rules</SyncButton>
  </Panel>
);

const DevicesPanel = () => (
  <Panel>
    <PanelHead>
      <h2>Devices</h2>
      <PlainButton aria-label="Detach devices">
        <DetachIcon />
      </PlainButton>
    </PanelHead>
    <TabBox>
      <Tabs>
        <TabButton $active>Endpoints</TabButton>
        <TabButton>Groups</TabButton>
        <TabButton>Scenes</TabButton>
      </Tabs>
      <TabBody>
        <Filter id="device-filter" right={16} />
        <DeviceScroll>
          <DeviceList>
            <GroupTitle>Actuator</GroupTitle>
            <DeviceItem href="#shutter">
              <ShutterIcon />
              Ankleide - R
            </DeviceItem>
            <GroupTitle>Alarm</GroupTitle>
            <DeviceItem href="#alarm" aria-label="Alarm">
              <TouchIcon />
            </DeviceItem>
          </DeviceList>
          <ScrollTrack>
            <ScrollArrow aria-label="Scroll up">
              <Chevron />
            </ScrollArrow>
            <Thumb $height={75} />
          </ScrollTrack>
        </DeviceScroll>
      </TabBody>
    </TabBox>
  </Panel>
);

const TaskbarRow = () => (
  <Taskbar>
    <TaskItem $width={59} aria-label="Start">
      <svg width="33" height="33" aria-hidden="true">
        <path d="M0 5L14 3V16H0ZM16 3L33 0V16H16ZM0 17H14V31L0 29ZM16 17H33V33L16 31Z" fill="#fff" />
      </svg>
    </TaskItem>
    {apps.map(([name, Icon]) => (
      <TaskItem key={name} $active={name === "Firefox"} aria-label={name}>
        <Icon />
      </TaskItem>
    ))}
    <Tray>
      <PlainButton aria-label="Keyboard">
        <svg width="38" height="24" aria-hidden="true">
          <rect x=".5" y=".5" width="37" height="23" rx="2" fill="#fff" stroke="#3d5a1e" />
          <rect x="3.5" y="4.5" width="31" height="15" fill="none" stroke="#2d3a1e" />
          <path d="M4 9.5H34M4 14.5H34M8.5 5V15M13.5 5V15M18.5 5V15M23.5 5V15M28.5 5V15M10.5 15V19M27.5 15V19" stroke="#2d3a1e" />
        </svg>
      </PlainButton>
      <PlainButton aria-label="Hidden icons">
        <svg width="12" height="8" aria-hidden="true">
          <path d="M1 7L6 1L11 7Z" fill="#fff" stroke="#4a6b22" strokeWidth=".6" />
        </svg>
      </PlainButton>
      <PlainButton aria-label="Network">
        <svg width="17" height="18" aria-hidden="true">
          <path
            d="M.5 17.5V14.5H3.5V11.5H6.5V8.5H9.5V5.5H12.5V1.5H16.5V17.5Z"
            fill="#fff"
            stroke="#3d5a1e"
          />
          <path d="M3.5 14.5V17M6.5 11.5V17M9.5 8.5V17M12.5 5.5V17" stroke="#3d5a1e" />
        </svg>
      </PlainButton>
      <PlainButton aria-label="Volume">
        <svg width="18" height="20" aria-hidden="true">
          <path d="M1 6H4L9 1V19L4 14H1Z" fill="#fff" stroke="#3d5a1e" />
          <path d="M13 6Q16 10 13 14" fill="none" stroke="#fff" />
        </svg>
      </PlainButton>
      <Clock>
        15:43
        <br />
        07.12.2014
      </Clock>
    </Tray>
  </Taskbar>
);

const App: React.FC = () => (
  <Page>
    <GlobalStyle />
    <Browser />
    <Header>
      <Logo href="#home">
        zipato<sup>®</sup>
      </Logo>
      <PageTitle>Rules creator</PageTitle>
      <HeaderLinks>
        {headerLinks.map((name) => (
          <a key={name} href={`#${name}`}>
            {name}
          </a>
        ))}
      </HeaderLinks>
    </Header>
    <Main>
      <Column $top={5}>
        <PuzzlePanel />
      </Column>
      <RuleCanvas />
      <Column $top={10}>
        <RulesPanel />
        <DevicesPanel />
      </Column>
    </Main>
    <Footer>
      <CanvasTools>
        <PlainButton aria-label="Delete">
          <TrashIcon />
        </PlainButton>
        <PlainButton aria-label="Clean up">
          <BroomIcon />
        </PlainButton>
      </CanvasTools>
      © 2014, Zipato, All rights reserved
    </Footer>
    <TaskbarRow />
    <Feedback>Feedback</Feedback>
  </Page>
);

export default App;
